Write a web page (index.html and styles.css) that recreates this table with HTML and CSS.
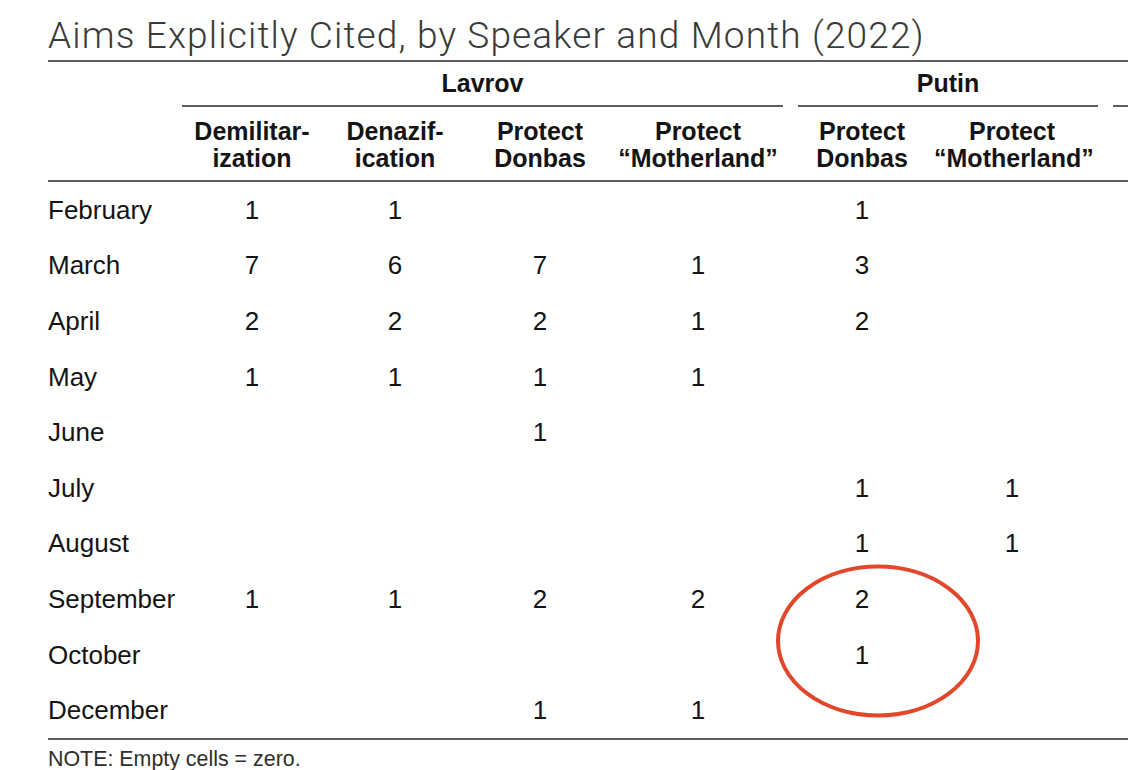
FILE: index.html
```html
<!DOCTYPE html>
<html lang="en">
<head>
<meta charset="utf-8">
<title>Aims Explicitly Cited, by Speaker and Month (2022)</title>
<link rel="stylesheet" href="styles.css">
</head>
<body>
<div class="page">
  <h1 class="title">Aims Explicitly Cited, by Speaker and Month (2022)</h1>
  <div class="table-wrap">
    <table class="data">
      <colgroup>
        <col class="w-stub"><col class="w-c1"><col class="w-c2"><col class="w-c3"><col class="w-c4"><col class="w-c5"><col class="w-c6"><col class="w-c7">
      </colgroup>
      <thead>
        <tr class="groups">
          <th></th>
          <th colspan="4"><div class="grp grp-lav">Lavrov</div></th>
          <th colspan="2"><div class="grp grp-put">Putin</div></th>
          <th><div class="grp grp-next">&nbsp;</div></th>
        </tr>
        <tr class="cols">
          <th></th>
          <th>Demilitar-<br>ization</th>
          <th>Denazif-<br>ication</th>
          <th>Protect<br>Donbas</th>
          <th class="pad4">Protect<br>“Motherland”</th>
          <th>Protect<br>Donbas</th>
          <th class="pad6">Protect<br>“Motherland”</th>
          <th></th>
        </tr>
      </thead>
      <tbody>
        <tr><td class="stub">February</td><td>1</td><td>1</td><td></td><td class="pad4"></td><td>1</td><td class="pad6"></td><td></td></tr>
        <tr><td class="stub">March</td><td>7</td><td>6</td><td>7</td><td class="pad4">1</td><td>3</td><td class="pad6"></td><td></td></tr>
        <tr><td class="stub">April</td><td>2</td><td>2</td><td>2</td><td class="pad4">1</td><td>2</td><td class="pad6"></td><td></td></tr>
        <tr><td class="stub">May</td><td>1</td><td>1</td><td>1</td><td class="pad4">1</td><td></td><td class="pad6"></td><td></td></tr>
        <tr><td class="stub">June</td><td></td><td></td><td>1</td><td class="pad4"></td><td></td><td class="pad6"></td><td></td></tr>
        <tr><td class="stub">July</td><td></td><td></td><td></td><td class="pad4"></td><td>1</td><td class="pad6">1</td><td></td></tr>
        <tr><td class="stub">August</td><td></td><td></td><td></td><td class="pad4"></td><td>1</td><td class="pad6">1</td><td></td></tr>
        <tr><td class="stub">September</td><td>1</td><td>1</td><td>2</td><td class="pad4">2</td><td>2</td><td class="pad6"></td><td></td></tr>
        <tr><td class="stub">October</td><td></td><td></td><td></td><td class="pad4"></td><td>1</td><td class="pad6"></td><td></td></tr>
        <tr class="last"><td class="stub">December</td><td></td><td></td><td>1</td><td class="pad4">1</td><td></td><td class="pad6"></td><td></td></tr>
      </tbody>
    </table>
    <svg class="circle" width="212" height="162" viewBox="0 0 212 162" aria-hidden="true">
      <ellipse cx="106" cy="81" rx="100" ry="74.5" fill="none" stroke="#e2462b" stroke-width="4"/>
    </svg>
  </div>
  <p class="note">NOTE: Empty cells = zero.</p>
</div>
</body>
</html>
```
FILE: styles.css
```css
html, body {
  margin: 0;
  padding: 0;
  background: #ffffff;
  overflow: hidden;
}

.page {
  width: 1265px;
  padding-left: 48px;
  font-family: "Liberation Sans", Arial, Helvetica, sans-serif;
  color: #161616;
}

.title {
  margin: 18px 0 0 0;
  padding-bottom: 6px;
  font-family: Roboto, "Liberation Sans", sans-serif;
  font-weight: 300;
  font-size: 37px;
  letter-spacing: 1.15px;
  line-height: 36px;
  color: #3a3a3a;
  border-bottom: 2px solid #5e5e5e;
  white-space: nowrap;
}

.table-wrap {
  position: relative;
}

.data {
  table-layout: fixed;
  border-collapse: separate;
  border-spacing: 0;
  width: 1217px;
}

.w-stub { width: 128px; }
.w-c1 { width: 152px; }
.w-c2 { width: 134px; }
.w-c3 { width: 156px; }
.w-c4 { width: 172px; }
.w-c5 { width: 144px; }
.w-c6 { width: 171px; }
.w-c7 { width: 160px; }

.data th {
  padding: 0;
  font-weight: 700;
  font-size: 25px;
  color: #141414;
  text-align: center;
}

.groups th {
  vertical-align: top;
}

.grp {
  line-height: 30px;
  padding: 6px 0 7px 0;
  border-bottom: 2px solid #5e5e5e;
}

.grp-lav { margin: 0 7px 0 6px; }
.grp-put { margin: 0 7px 0 8px; }
.grp-next { margin: 0 -60px 0 8px; }

.cols th {
  line-height: 27px;
  padding: 11px 0 8px 0;
  border-bottom: 2px solid #5e5e5e;
}

.data td {
  height: 55.6px;
  padding: 0;
  font-size: 26px;
  line-height: 28px;
  text-align: center;
  vertical-align: middle;
  color: #141414;
}

.data td.stub {
  text-align: left;
}

.data .pad4 { padding-right: 12px; }
.data .pad6 { padding-right: 15px; }

.last td {
  border-bottom: 2px solid #5e5e5e;
}

.circle {
  position: absolute;
  left: 724px;
  top: 498px;
}

.note {
  margin: 7px 0 0 0;
  font-size: 21.4px;
  line-height: 24px;
  color: #2e2e2e;
}
```
